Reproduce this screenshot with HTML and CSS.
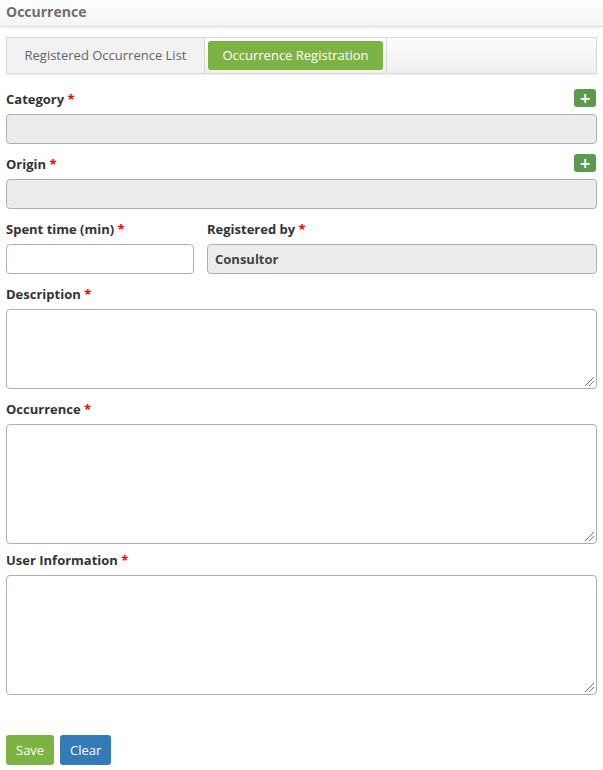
FILE: index.html
```html
<!DOCTYPE html>
<html>
<head>
<meta charset="utf-8">
<link rel="stylesheet" href="styles.css">
</head>
<body>
<div class="header">Occurrence</div>
<div class="content">
  <div class="tabs">
    <div class="tab">Registered Occurrence List</div>
    <div class="tab-wrap"><div class="tab active">Occurrence Registration</div></div>
  </div>

  <div class="field">
    <div class="label-row"><label>Category <span class="req">*</span></label><button class="plus">+</button></div>
    <div class="input readonly"></div>
  </div>
  <div class="field">
    <div class="label-row"><label>Origin <span class="req">*</span></label><button class="plus">+</button></div>
    <div class="input readonly"></div>
  </div>
  <div class="row">
    <div class="field col-a">
      <div class="label-row"><label>Spent time (min) <span class="req">*</span></label></div>
      <div class="input"></div>
    </div>
    <div class="field col-b">
      <div class="label-row"><label>Registered by <span class="req">*</span></label></div>
      <div class="input readonly value">Consultor</div>
    </div>
  </div>
  <div class="field">
    <div class="label-row"><label>Description <span class="req">*</span></label></div>
    <div class="textarea short"><span class="grip"></span></div>
  </div>
  <div class="field tight">
    <div class="label-row"><label>Occurrence <span class="req">*</span></label></div>
    <div class="textarea tall"><span class="grip"></span></div>
  </div>
  <div class="field">
    <div class="label-row"><label>User Information <span class="req">*</span></label></div>
    <div class="textarea tall"><span class="grip"></span></div>
  </div>
  <div class="actions">
    <button class="btn save">Save</button>
    <button class="btn clear">Clear</button>
  </div>
</div>
</body>
</html>
```
FILE: styles.css
```css
* { box-sizing: border-box; }
body {
  margin: 0;
  font-family: "Open Sans", "DejaVu Sans", sans-serif;
  color: #333;
  background: #fff;
}
.header {
  height: 27px;
  padding: 2px 6px 0;
  font-size: 14px;
  font-weight: 700;
  color: #6e6e6e;
  background: linear-gradient(#ffffff, #f3f3f3);
  border-bottom: 1px solid #dcdcdc;
  box-shadow: 0 2px 2px rgba(0,0,0,0.04);
}
.content {
  padding: 10px 6px 0;
}
.tabs {
  display: flex;
  height: 37px;
  border: 1px solid #d9d9d9;
  background: linear-gradient(#fcfcfc, #f0f0f0);
  box-shadow: 0 2px 2px rgba(0,0,0,0.05);
  margin-bottom: 17px;
}
.tab {
  width: 198px;
  font-size: 13px;
  color: #666;
  display: flex;
  align-items: center;
  justify-content: center;
  padding-bottom: 2px;
  background: #f2f2f2;
  border-right: 1px solid #d9d9d9;
}
.tab-wrap {
  padding: 3px;
  border-right: 1px solid #d9d9d9;
}
.tab.active {
  width: 175px;
  height: 29px;
  background: #7cb342;
  color: #fff;
  border-radius: 3px;
  border-right: none;
}
.field { margin-bottom: 12px; }
.field.tight { margin-bottom: 8px; }
.label-row {
  display: flex;
  justify-content: space-between;
  align-items: flex-start;
  height: 18px;
  margin-bottom: 5px;
}
label {
  font-size: 13px;
  font-weight: 700;
  color: #333;
  line-height: 17px;
}
.req { color: #e00; }
.plus {
  align-self: flex-end;
  width: 22px;
  height: 18px;
  margin: 0 1px 2px 0;
  padding: 0;
  border: none;
  border-radius: 3px;
  background: #5b9a4c;
  color: #fff;
  font-family: "DejaVu Sans", sans-serif;
  font-weight: 700;
  font-size: 14px;
  line-height: 18px;
}
.input {
  height: 30px;
  border: 1px solid #a9b1ad;
  border-radius: 4px;
  background: #fff;
}
.input.readonly { background: #ececec; }
.input.value {
  font-size: 13px;
  font-weight: 700;
  color: #444;
  padding: 5px 7px;
}
.row { display: flex; gap: 13px; }
.col-a { width: 188px; }
.col-b { flex: 1; }
.textarea {
  position: relative;
  border: 1px solid #a9b1ad;
  border-radius: 4px;
  background: #fff;
}
.textarea.short { height: 80px; }
.textarea.tall { height: 120px; }
.grip {
  position: absolute;
  right: 2px;
  bottom: 2px;
  width: 9px;
  height: 9px;
  background: linear-gradient(135deg, transparent 45%, #777 45%, #777 52%, transparent 52%, transparent 70%, #777 70%, #777 77%, transparent 77%);
}
.actions {
  display: flex;
  gap: 6px;
  padding-top: 28px;
}
.btn {
  height: 30px;
  border: none;
  border-radius: 3px;
  color: #fff;
  font-family: "Open Sans", sans-serif;
  font-size: 13px;
  padding: 0 10px;
}
.save { background: #7cb342; width: 48px; }
.clear { background: #337ab7; width: 51px; }
```
